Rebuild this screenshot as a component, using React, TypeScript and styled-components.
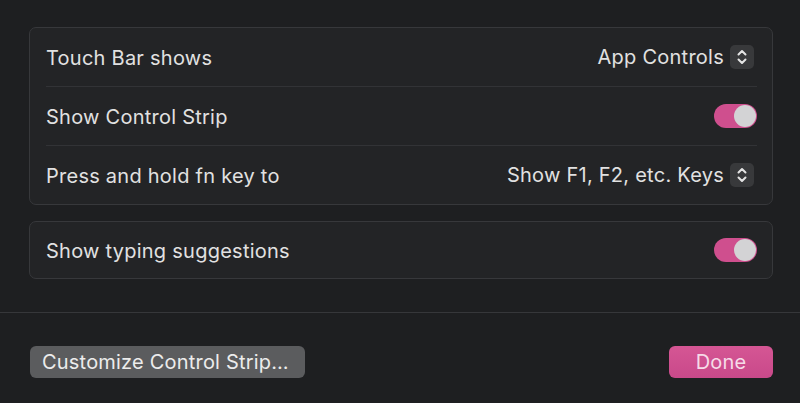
import {type FC} from 'react';
import styled, {createGlobalStyle} from 'styled-components';

const GlobalStyle = createGlobalStyle`
    html, body {
        margin: 0;
        padding: 0;
        background: #1e1f21;
    }
    body {
        font-family: Inter, "Noto Sans", sans-serif;
        color: #e0e0e0;
        -webkit-font-smoothing: antialiased;
    }
`;

const Sheet = styled.div`
    width: 800px;
    height: 403px;
    display: flex;
    flex-direction: column;
    overflow: hidden;
`;
const Content = styled.div`
    padding: 27px 27px 0 29px;
    display: flex;
    flex-direction: column;
    gap: 16px;
    height: 313px;
    box-sizing: border-box;
    border-bottom: 1px solid #36373a;
`;
const Group = styled.div`
    background: #232426;
    border: 1px solid #37383b;
    border-radius: 7px;
    padding: 0 15px 0 16px;
`;
const Row = styled.div<{ $divider?: boolean; $height?: number }>`
    height: ${p => (p.$height ?? 58) + (p.$divider ? 1 : 0)}px;
    padding-top: 2px;
    box-sizing: border-box;
    display: flex;
    align-items: center;
    justify-content: space-between;
    border-top: ${p => (p.$divider ? '1px solid #323336' : 'none')};
`;
const Label = styled.span`
    font-size: 20px;
    letter-spacing: 0.25px;
    color: #e1e1e1;
`;
const PopupValue = styled.div`
    display: flex;
    align-items: center;
    gap: 6px;
    font-size: 20px;
    letter-spacing: 0.25px;
    color: #e1e1e1;
    margin-top: -2px;
`;
const Stepper = styled.div`
    width: 24px;
    height: 24px;
    margin-right: 3px;
    border-radius: 5px;
    background: #38393b;
    display: flex;
    align-items: center;
    justify-content: center;
`;
const Switch = styled.div<{ $on: boolean }>`
    width: 43px;
    height: 24px;
    margin-top: -2px;
    border-radius: 12px;
    background: ${p => (p.$on ? '#cf4f8e' : '#4a4b4d')};
    display: flex;
    align-items: center;
    justify-content: ${p => (p.$on ? 'flex-end' : 'flex-start')};
    padding: 0 1px;
    box-sizing: border-box;
`;
const Knob = styled.div`
    width: 22px;
    height: 22px;
    border-radius: 50%;
    background: #d3d3d5;
`;
const Footer = styled.div`
    flex: 1;
    display: flex;
    align-items: center;
    justify-content: space-between;
    padding: 7px 27px 0 30px;
`;
const Button = styled.button<{ $primary?: boolean }>`
    height: 32px;
    border: none;
    border-radius: 6px;
    font-family: inherit;
    font-size: 20px;
    letter-spacing: 0.2px;
    color: ${p => (p.$primary ? '#f6dbe8' : '#ececec')};
    background: ${p => (p.$primary ? 'linear-gradient(#d55694, #c9498a)' : '#5b5c5e')};
    padding: 0 12px;
    width: ${p => (p.$primary ? '104px' : '275px')};
    text-align: ${p => (p.$primary ? 'center' : 'left')};
`;

const Chevrons: FC = () => (
    <svg width="12" height="18" viewBox="0 0 12 18" fill="none" stroke="#e4e4e4" strokeWidth="2"
         strokeLinecap="round" strokeLinejoin="round">
        <path d="M2.5 6.5 L6 3 L9.5 6.5"/>
        <path d="M2.5 11.5 L6 15 L9.5 11.5"/>
    </svg>
);

const Popup: FC<{ value: string }> = ({value}) => (
    <PopupValue>
        {value}
        <Stepper><Chevrons/></Stepper>
    </PopupValue>
);

const Toggle: FC<{ on: boolean }> = ({on}) => (
    <Switch $on={on}><Knob/></Switch>
);

export default function App() {
    return (
        <>
            <GlobalStyle/>
            <Sheet>
                <Content>
                    <Group>
                        <Row>
                            <Label>Touch Bar shows</Label>
                            <Popup value="App Controls"/>
                        </Row>
                        <Row $divider>
                            <Label>Show Control Strip</Label>
                            <Toggle on/>
                        </Row>
                        <Row $divider>
                            <Label>Press and hold fn key to</Label>
                            <Popup value="Show F1, F2, etc. Keys"/>
                        </Row>
                    </Group>
                    <Group>
                        <Row $height={56}>
                            <Label>Show typing suggestions</Label>
                            <Toggle on/>
                        </Row>
                    </Group>
                </Content>
                <Footer>
                    <Button>Customize Control Strip…</Button>
                    <Button $primary>Done</Button>
                </Footer>
            </Sheet>
        </>
    );
}
